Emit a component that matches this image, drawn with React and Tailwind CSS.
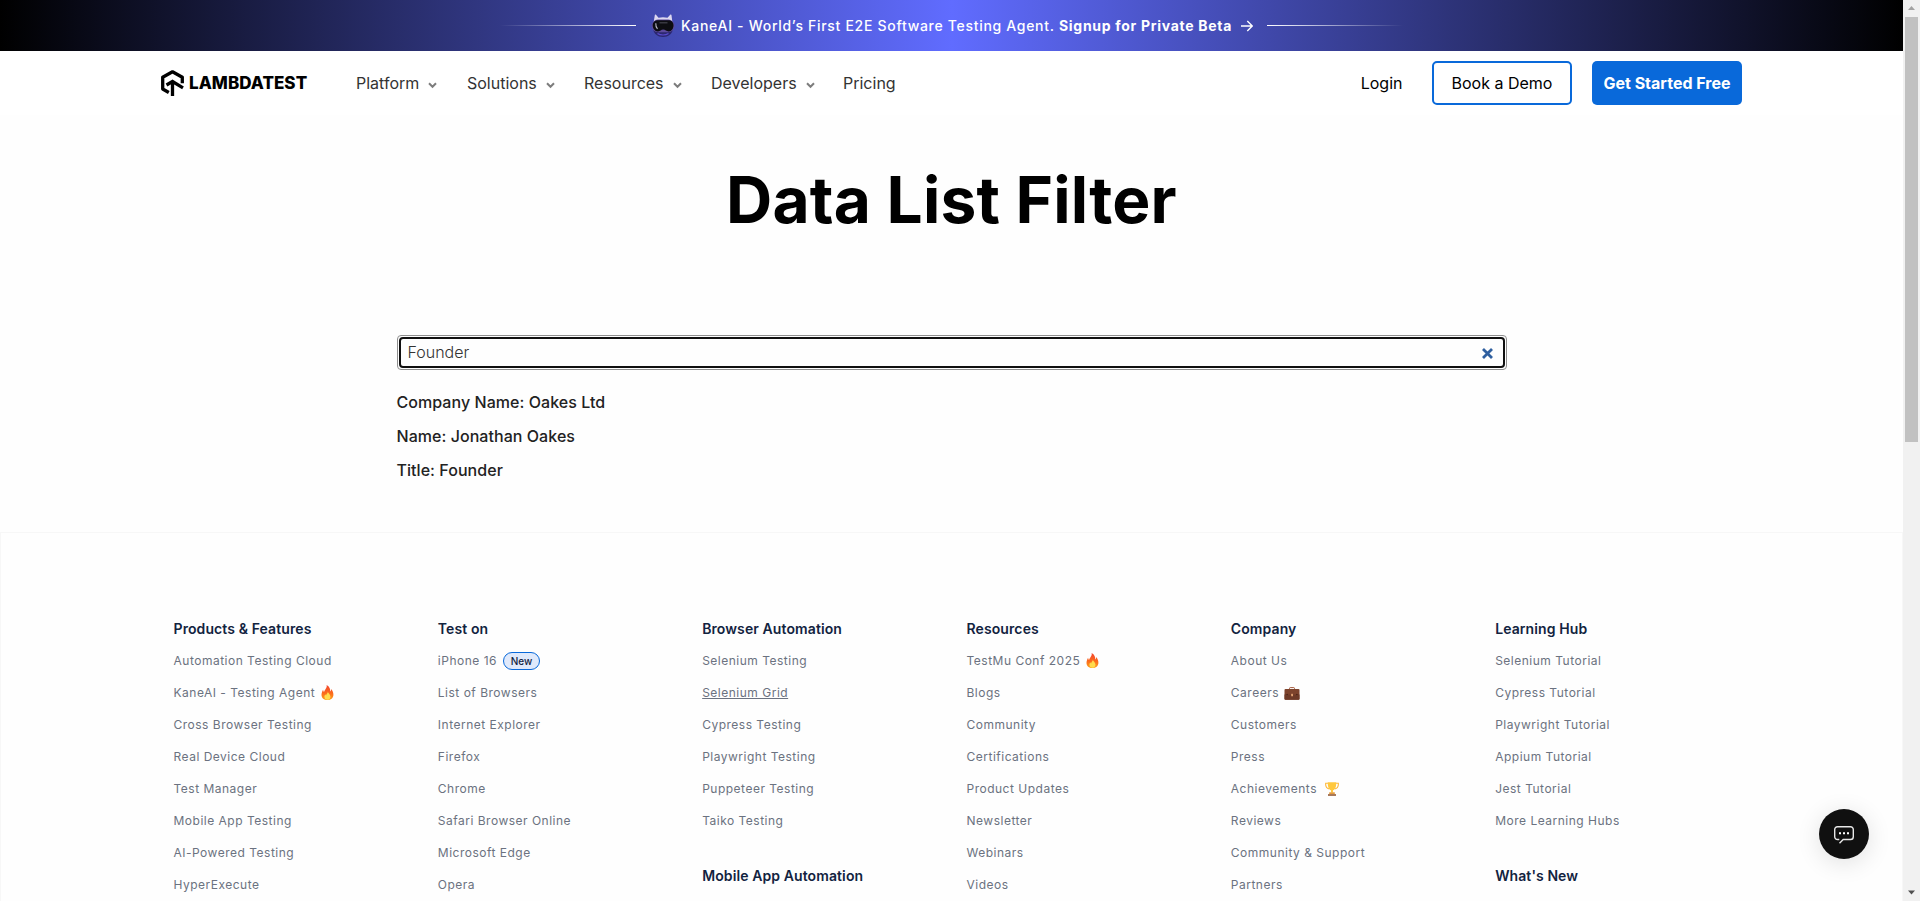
const NAV = [
  { label: 'Platform', width: 'w-[111px]', menu: true },
  { label: 'Solutions', width: 'w-[117px]', menu: true },
  { label: 'Resources', width: 'w-[127px]', menu: true },
  { label: 'Developers', width: 'w-[132px]', menu: true },
  { label: 'Pricing', width: 'w-[60px]', menu: false },
];

const RESULTS = ['Company Name: Oakes Ltd', 'Name: Jonathan Oakes', 'Title: Founder'];

const COLUMNS = [
  [
    {
      title: 'Products & Features',
      links: [
        'Automation Testing Cloud',
        { text: 'KaneAI - Testing Agent', icon: 'fire' },
        'Cross Browser Testing',
        'Real Device Cloud',
        'Test Manager',
        'Mobile App Testing',
        'AI-Powered Testing',
        'HyperExecute',
      ],
    },
  ],
  [
    {
      title: 'Test on',
      links: [
        { text: 'iPhone 16', badge: 'New' },
        'List of Browsers',
        'Internet Explorer',
        'Firefox',
        'Chrome',
        'Safari Browser Online',
        'Microsoft Edge',
        'Opera',
      ],
    },
  ],
  [
    {
      title: 'Browser Automation',
      links: [
        'Selenium Testing',
        { text: 'Selenium Grid', underline: true },
        'Cypress Testing',
        'Playwright Testing',
        'Puppeteer Testing',
        'Taiko Testing',
      ],
    },
    { title: 'Mobile App Automation', links: [] },
  ],
  [
    {
      title: 'Resources',
      links: [
        { text: 'TestMu Conf 2025', icon: 'fire' },
        'Blogs',
        'Community',
        'Certifications',
        'Product Updates',
        'Newsletter',
        'Webinars',
        'Videos',
      ],
    },
  ],
  [
    {
      title: 'Company',
      links: [
        'About Us',
        { text: 'Careers', icon: 'briefcase' },
        'Customers',
        'Press',
        { text: 'Achievements', icon: 'trophy' },
        'Reviews',
        'Community & Support',
        'Partners',
      ],
    },
  ],
  [
    {
      title: 'Learning Hub',
      links: [
        'Selenium Tutorial',
        'Cypress Tutorial',
        'Playwright Tutorial',
        'Appium Tutorial',
        'Jest Tutorial',
        'More Learning Hubs',
      ],
    },
    { title: "What's New", links: [] },
  ],
];

function Fire() {
  return (
    <svg className="ml-[6px] mb-px h-[15px] w-[13px] shrink-0" viewBox="0 0 13 15">
      <defs>
        <linearGradient id="flame" x1="0" y1="0" x2="0" y2="1">
          <stop offset="0" stopColor="#f2452f" />
          <stop offset="0.55" stopColor="#fb6a1c" />
          <stop offset="1" stopColor="#fda21c" />
        </linearGradient>
      </defs>
      <path fill="url(#flame)" d="M5.6 0C8.6 1.6 9.4 4 9.2 6.4c.7-.5 1-1.3.9-2.4 1.500 1.700 2.400 3.700 2.300 5.900C12.300 13 9.800 15 6.400 15S.5 12.900.5 9.900C.5 7.700 1.400 5.900 2.100 4.700c.1 1.200.4 2 1 2.400C3.300 4.700 6.500 3.200 5.600 0z" />
      <path fill="#ffdc4d" d="M6.800 6.500c.2 1.700 2.700 2.900 2.700 5.200 0 1.900-1.400 3.100-3.100 3.100s-3-1.200-3-3c0-1.200.6-2 1-2.500.1.600.3 1 .7 1.200C5.200 9 7 8.200 6.800 6.500z" />
    </svg>
  );
}

function BriefcaseIcon() {
  return (
    <svg className="ml-[5px] mt-px h-[13px] w-[16px] shrink-0" viewBox="0 0 16 13">
      <path d="M5.500 2.500V1.300c0-.4.300-.7.700-.7h3.600c.4 0 .7.300.7.700v1.200" fill="none" stroke="#a55a3c" />
      <rect x="0.500" y="2" width="15" height="10.800" rx="1" fill="#7d432c" />
      <path d="M.5 7.500h15v4.300a1 1 0 0 1-1 1h-13a1 1 0 0 1-1-1z" fill="#6e3a27" />
      <path d="M1.500 7.500 4 6.800v1.400zM14.500 7.500 12 6.800v1.400z" fill="#4f271a" />
      <rect x="7.200" y="6.700" width="1.800" height="2.600" rx="0.500" fill="#e2a373" />
    </svg>
  );
}

function Trophy() {
  return (
    <svg className="ml-[8px] h-[14px] w-[14px] shrink-0" viewBox="0 0 14 14">
      <path d="M3 1.200H.7C.4 4.200 1.700 6.500 4.200 6.900M11 1.200h2.300C13.600 4.200 12.300 6.500 9.800 6.900" fill="none" stroke="#fdb83b" strokeWidth="1.100" />
      <path d="M2.800.2h8.400c.1 4.200-.7 7.300-3.200 8.100v2.200H6V8.300C3.500 7.500 2.700 4.400 2.800.2z" fill="#ffc83d" />
      <path d="M4.200 10.300h5.600v2H4.200z" fill="#e39a3c" />
      <path d="M3 12h8v2H3z" fill="#a87a5a" />
    </svg>
  );
}

const ICONS = { fire: Fire, briefcase: BriefcaseIcon, trophy: Trophy };

function FooterLink({ item }) {
  const link = typeof item === 'string' ? { text: item } : item;
  const Icon = link.icon ? ICONS[link.icon] : null;
  return (
    <li className="flex h-8 items-center whitespace-nowrap text-[12px] tracking-[0.5px] text-[#6b7280]">
      <a className={link.underline ? 'underline underline-offset-1' : ''}>{link.text}</a>
      {Icon && <Icon />}
      {link.badge && (
        <span className="ml-[6px] flex h-[18px] w-[37px] items-center justify-center rounded-full border border-[#0969da] bg-[#dfe9fb] text-[10px] font-medium tracking-normal text-[#12233f]">
          {link.badge}
        </span>
      )}
    </li>
  );
}

function Chevron() {
  return (
    <svg className="mt-[5px] ml-[9px] h-[7px] w-[9px]" viewBox="0 0 9 7" fill="none" stroke="#7d7d7d" strokeWidth="2">
      <path d="M1 1.300 4.500 4.800 8 1.300" />
    </svg>
  );
}

function KaneMascot() {
  return (
    <svg className="h-6 w-6" viewBox="0 0 24 24">
      <path d="M2 15h20c-.8 4.800-4.600 8-10 8S2.800 19.800 2 15z" fill="#2b2770" />
      <path d="M6.500 19.500c3 2 8 2 11 0" stroke="#5a4bd0" strokeWidth="1.200" fill="none" />
      <path d="M3.800 1.200c0-.7.700-.9 1.200-.5L7.500 3.800c3-.8 6-.8 9 0L19.200.7c.6-.4 1.300-.2 1.300.5L21.500 9h-19z" fill="#dcd8f0" />
      <rect x="0.600" y="5.600" width="23" height="12.600" rx="6.300" fill="#5c4a9c" />
      <path d="M7 6.300h10.500c3.200 0 5 2.200 5 5 0 3.300-1.800 6.200-4.800 6.200-2.500 0-3.200-1.900-5.500-1.900s-2.700 1.900-5.200 1.900c-3.200 0-5.300-2.900-5.300-6.200 0-2.800 2-5 5.300-5z" fill="#0d0d12" />
      <path d="M4.800 9.300c-.2 2.400.4 4.200 1.700 5.600" stroke="#b9b9c4" strokeWidth="1.100" fill="none" />
      <path d="M8.500 8.800h8" stroke="#44444e" strokeWidth="1.200" />
    </svg>
  );
}

function Banner() {
  return (
    <div className="flex h-[51px] shrink-0 items-center bg-[linear-gradient(90deg,#000_0%,#606cff_50%,#000_100%)] text-[14px] leading-[21px] tracking-[0.7px] whitespace-nowrap text-white">
      <div className="ml-[500px] h-px w-[136px] bg-gradient-to-r from-transparent to-white" />
      <div className="ml-[15px] flex w-6 items-center">
        <KaneMascot />
      </div>
      <div className="ml-[6px] flex w-[551px] items-center">
        <span className="w-[378px] font-medium">KaneAI - World’s First E2E Software Testing Agent.</span>
        <span className="font-bold">Signup for Private Beta</span>
      </div>
      <svg className="ml-[9px] h-3 w-3" viewBox="0 0 12 12" fill="none" stroke="#fff" strokeWidth="1.400">
        <path d="M0 6h11M6.300 1l5 5-5 5" />
      </svg>
      <div className="ml-[14px] h-px w-[136px] bg-gradient-to-r from-white to-transparent" />
    </div>
  );
}

function Header() {
  return (
    <header className="flex h-16 shrink-0 items-center bg-white pr-[161px] pl-[161px] text-[16px] text-[#333] whitespace-nowrap">
      <div className="flex w-[195px] items-center">
        <svg className="h-[26px] w-[23px]" viewBox="0 0 23 26" fill="none" stroke="#000" strokeWidth="3.300">
          <path d="M7.800 22.500 1.700 19V7.300L11.500 1.800l9.800 5.500v6" strokeLinejoin="round" />
          <path d="M5.500 15 11.500 11.500 22 17.800M11.500 12v14" />
        </svg>
        <span className="ml-[5px] text-[17px] leading-5 font-extrabold tracking-[0.05px] text-black">LAMBDATEST</span>
      </div>
      <nav className="flex">
        {NAV.map((item) => (
          <a key={item.label} className={`flex items-center ${item.width}`}>
            {item.label}
            {item.menu && <Chevron />}
          </a>
        ))}
      </nav>
      <div className="ml-auto flex items-center text-black">
        <a className="mr-[29.500px]">Login</a>
        <a className="mr-5 flex h-11 w-[140px] items-center justify-center rounded-[5px] border-2 border-[#0969da]">Book a Demo</a>
        <a className="flex h-11 w-[150px] items-center justify-center rounded-[5px] bg-[#0969da] font-bold text-white">Get Started Free</a>
      </div>
    </header>
  );
}

function Filter() {
  return (
    <main className="flex h-[417px] shrink-0 flex-col items-center">
      <h1 className="mt-[37px] text-[64px] leading-[96px] font-bold tracking-[0.2px] text-black">Data List Filter</h1>
      <div className="mt-[87px] h-[35px] w-[1110px] rounded-[4px] border border-[#8f8f8f] p-px">
        <div className="flex h-full items-center rounded-[4px] border-2 border-[#101010] px-[7px]">
          <span className="grow pb-[2px] text-[16px] font-light text-[#333]">Founder</span>
          <svg className="mt-px mr-[3px] h-[11px] w-[11px]" viewBox="0 0 11 11" stroke="#2f5f9f" strokeWidth="2.800">
            <path d="M1 1l9 9M10 1l-9 9" />
          </svg>
        </div>
      </div>
      <div className="mt-[15px] w-[1110px] text-[16px] leading-[34px] font-medium tracking-[0.05px] text-[#222]">
        {RESULTS.map((row) => (
          <p key={row}>{row}</p>
        ))}
      </div>
    </main>
  );
}

function Footer() {
  return (
    <footer className="min-h-0 grow border border-b-0 border-[#f7f7f7] pt-[79px]">
      <div className="mx-auto grid w-[1586px] grid-cols-6">
        {COLUMNS.map((sections, index) => (
          <div key={index} className="flex flex-col gap-[22px] px-[15px]">
            {sections.map((section) => (
              <section key={section.title}>
                <h2 className="flex h-8 items-center text-[14px] font-semibold tracking-[0.1px] whitespace-nowrap text-[#12233f]">
                  {section.title}
                </h2>
                <ul className="mt-px">
                  {section.links.map((item) => (
                    <FooterLink key={typeof item === 'string' ? item : item.text} item={item} />
                  ))}
                </ul>
              </section>
            ))}
          </div>
        ))}
      </div>
    </footer>
  );
}

function Scrollbar() {
  return (
    <div className="flex w-[17px] shrink-0 flex-col items-center bg-[#f1f1f1]">
      <svg className="h-[17px] w-[17px] shrink-0" viewBox="0 0 17 17">
        <path d="M5 10h7L8.500 6z" fill="#a3a3a3" />
      </svg>
      <div className="h-[425px] w-[13px] bg-[#c1c1c1]" />
      <svg className="mt-auto h-[17px] w-[17px] shrink-0" viewBox="0 0 17 17">
        <path d="M5 6.500h7L8.500 10.500z" fill="#505050" />
      </svg>
    </div>
  );
}

function ChatButton() {
  return (
    <button className="absolute top-[809px] left-[1819px] flex h-[50px] w-[50px] items-center justify-center rounded-full bg-[#101010] shadow-[0_4px_24px_rgba(0,0,0,0.12)]">
      <svg className="mt-[1px] h-[18px] w-5" viewBox="0 0 20 18" fill="none" stroke="#e8e8e8" strokeWidth="1.400">
        <path d="M5.500 17.300l3.700-3.800h7.300a2.800 2.800 0 0 0 2.800-2.800V3.500A2.800 2.800 0 0 0 16.500.7h-13A2.800 2.800 0 0 0 .7 3.500v7.200a2.800 2.800 0 0 0 2.800 2.800h1.800" />
        <path d="M5 7.200h2M9 7.200h2M13 7.200h2" stroke="#fff" strokeWidth="2" />
      </svg>
    </button>
  );
}

export default function App() {
  return (
    <div className="relative flex h-[901px] w-[1920px] overflow-hidden bg-[#fefefe] font-['Inter',sans-serif]">
      <div className="flex w-[1903px] flex-col">
        <Banner />
        <Header />
        <Filter />
        <Footer />
      </div>
      <Scrollbar />
      <ChatButton />
    </div>
  );
}
